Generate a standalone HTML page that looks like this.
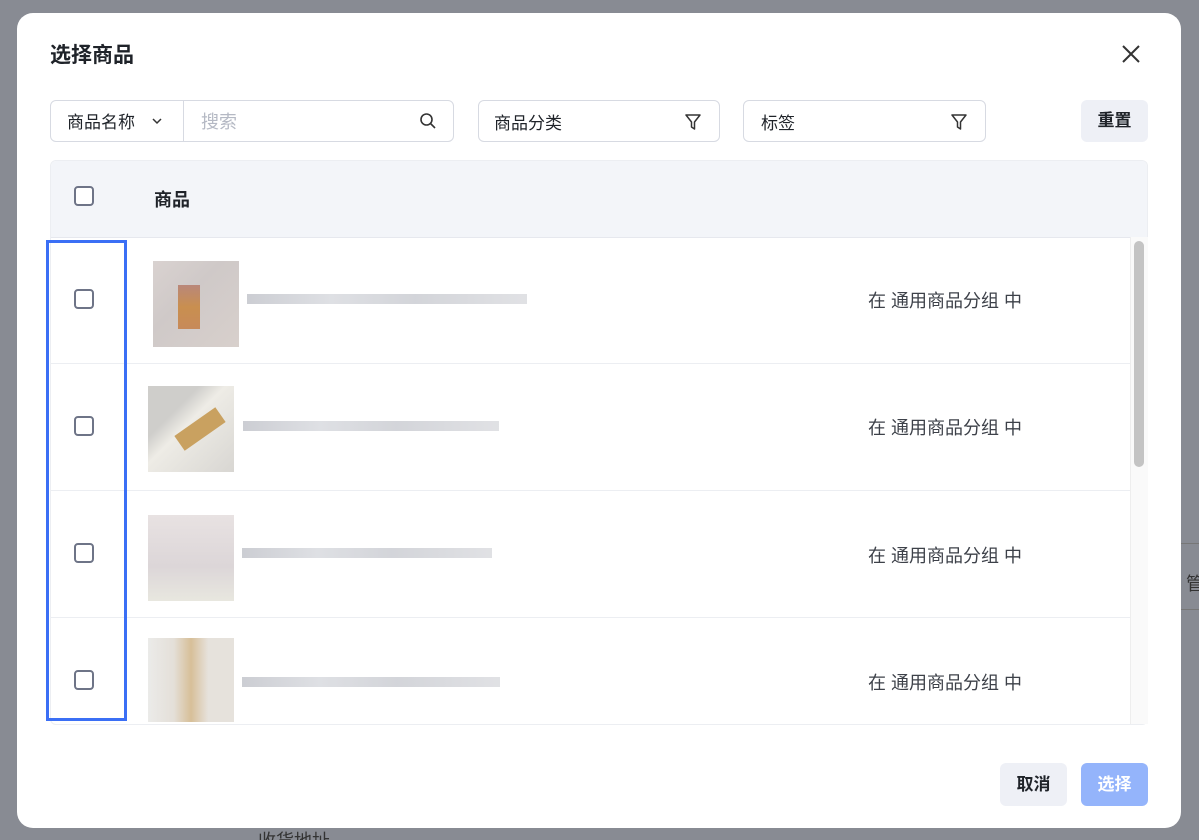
<!DOCTYPE html>
<html><head><meta charset="utf-8"><style>
*{box-sizing:border-box;margin:0;padding:0}
html,body{width:1199px;height:840px;overflow:hidden}
body{background:#888b93;font-family:"Liberation Sans","Noto Sans CJK SC",sans-serif;position:relative;color:#1f2329;line-height:1.2}
.abs{position:absolute}
.modal{left:17px;top:13px;width:1164px;height:815px;background:#fff;border-radius:16px}
.box{border:1px solid #d7dae2;border-radius:6px;height:42px;background:#fff}
.cb{position:absolute;width:20px;height:20px;border:2px solid #6e7487;border-radius:4px;background:#fff}
.row{position:absolute;left:50px;width:1080px;border-bottom:1px solid #eceef2}
.txt{font-size:18px;color:#3d4149}
.blur{position:absolute;height:10px;background:linear-gradient(90deg,#bfc1c8,#d6d8dd 30%,#c8cad0 60%,#d9dade);opacity:.8}
</style></head><body>
<div class="abs" style="left:1186px;top:574px;font-size:18px;color:#333">管</div>
<div class="abs" style="left:1181px;top:543px;width:18px;height:1px;background:#777"></div>
<div class="abs" style="left:1181px;top:609px;width:18px;height:1px;background:#777"></div>
<div class="abs" style="left:258px;top:831px;font-size:18px;color:#333">收货地址</div>
<div class="abs modal"></div>
<div class="abs" style="left:50px;top:43px;font-size:21px;font-weight:bold">选择商品</div>
<svg class="abs" style="left:1121px;top:44px" width="20" height="20" viewBox="0 0 20 20"><path d="M2 2L18 18M18 2L2 18" stroke="#333" stroke-width="2"/></svg>
<div class="abs box" style="left:50px;top:100px;width:404px"></div>
<div class="abs" style="left:183px;top:101px;width:1px;height:40px;background:#d7dae2"></div>
<div class="abs" style="left:67px;top:113px;font-size:17px">商品名称</div>
<svg class="abs" style="left:151px;top:116px" width="12" height="10" viewBox="0 0 12 10"><path d="M2 3L6 7L10 3" stroke="#333" stroke-width="1.5" fill="none"/></svg>
<div class="abs" style="left:201px;top:112px;font-size:18px;color:#b5b9c4">搜索</div>
<svg class="abs" style="left:419px;top:112px" width="18" height="18" viewBox="0 0 18 18"><circle cx="7.5" cy="7.5" r="5.5" stroke="#333" stroke-width="1.6" fill="none"/><path d="M11.5 11.5L16 16" stroke="#333" stroke-width="1.6"/></svg>
<div class="abs box" style="left:478px;top:100px;width:242px"></div>
<div class="abs" style="left:494px;top:114px;font-size:17px">商品分类</div>
<div class="abs box" style="left:743px;top:100px;width:243px"></div>
<div class="abs" style="left:761px;top:114px;font-size:17px">标签</div>
<svg class="abs" style="left:684px;top:113px" width="18" height="18" viewBox="0 0 18 18"><path d="M2 2H16L10.5 9V16L7.5 14V9Z" stroke="#333" stroke-width="1.5" fill="none" stroke-linejoin="round"/></svg>
<svg class="abs" style="left:950px;top:113px" width="18" height="18" viewBox="0 0 18 18"><path d="M2 2H16L10.5 9V16L7.5 14V9Z" stroke="#333" stroke-width="1.5" fill="none" stroke-linejoin="round"/></svg>
<div class="abs" style="left:1081px;top:100px;width:67px;height:42px;background:#eef0f6;border-radius:6px;font-size:17px;font-weight:bold;text-align:center;line-height:42px">重置</div>
<div class="abs" style="left:50px;top:160px;width:1098px;height:565px;border:1px solid #eceef2;border-radius:6px;overflow:hidden">
<div style="height:77px;background:#f3f5f9;border-bottom:1px solid #e6e8ee"></div></div>
<div class="cb" style="left:74px;top:186px"></div>
<div class="abs" style="left:154px;top:190px;font-size:18px;font-weight:bold">商品</div>
<div class="abs" style="left:1130px;top:237px;width:18px;height:487px;background:#fafafa;border-left:1px solid #eee"></div>
<div class="abs" style="left:1134px;top:241px;width:10px;height:226px;background:#c4c4c4;border-radius:5px"></div>
<div class="row" style="top:237px;height:127px"></div>
<div class="row" style="top:364px;height:127px"></div>
<div class="row" style="top:491px;height:127px"></div>
<div class="cb" style="left:74px;top:289px"></div>
<div class="cb" style="left:74px;top:416px"></div>
<div class="cb" style="left:74px;top:543px"></div>
<div class="cb" style="left:74px;top:670px"></div>
<div class="abs" style="left:153px;top:261px;width:86px;height:86px;background:linear-gradient(135deg,#d9d2d0,#cfc9c8 40%,#d8d0cc)"></div>
<div class="abs" style="left:178px;top:285px;width:22px;height:44px;background:linear-gradient(#b9877a,#c98f4f 50%,#c78a5a)"></div>
<div class="abs" style="left:148px;top:386px;width:86px;height:86px;background:linear-gradient(135deg,#cfcecb 30%,#eeece6 45%,#d8d6d2)"></div>
<div class="abs" style="left:175px;top:420px;width:50px;height:18px;background:#c9a160;transform:rotate(-35deg)"></div>
<div class="abs" style="left:148px;top:515px;width:86px;height:86px;background:linear-gradient(#e8e2e2,#dcd6d8 60%,#e8e7df)"></div>
<div class="abs" style="left:148px;top:638px;width:86px;height:84px;background:linear-gradient(90deg,#ebebe9,#e4dfd8 30%,#d7bf98 50%,#e6e2dc 70%)"></div>
<div class="blur" style="left:247px;top:294px;width:280px"></div>
<div class="blur" style="left:243px;top:421px;width:256px"></div>
<div class="blur" style="left:242px;top:548px;width:250px"></div>
<div class="blur" style="left:242px;top:677px;width:258px"></div>
<div class="abs txt" style="left:868px;top:291px">在 通用商品分组 中</div>
<div class="abs txt" style="left:868px;top:418px">在 通用商品分组 中</div>
<div class="abs txt" style="left:868px;top:546px">在 通用商品分组 中</div>
<div class="abs txt" style="left:868px;top:673px">在 通用商品分组 中</div>
<div class="abs" style="left:46px;top:240px;width:81px;height:481px;border:3px solid #3b6ff5"></div>
<div class="abs" style="left:1000px;top:763px;width:67px;height:43px;background:#eef0f6;border-radius:6px;font-size:17px;font-weight:bold;text-align:center;line-height:43px">取消</div>
<div class="abs" style="left:1081px;top:763px;width:67px;height:43px;background:#94b4fb;border-radius:6px;font-size:17px;font-weight:bold;color:#fff;text-align:center;line-height:43px">选择</div>
</body></html>
